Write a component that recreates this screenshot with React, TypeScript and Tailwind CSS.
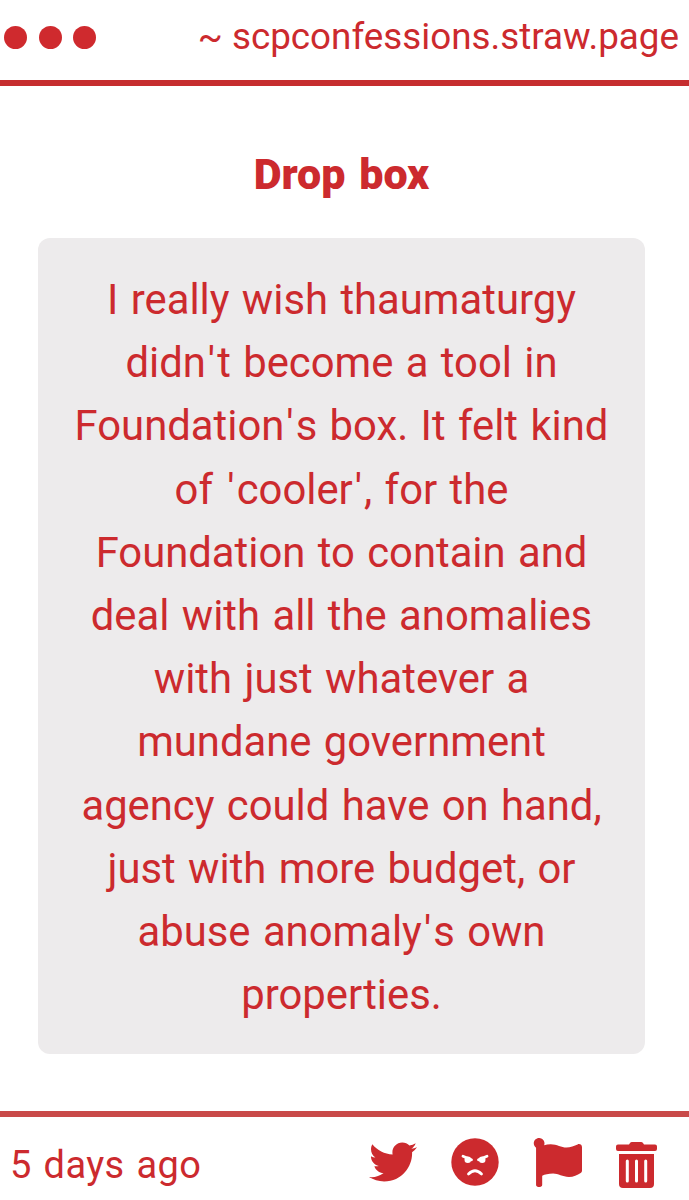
import { FaFlag, FaTwitter } from 'react-icons/fa'

const messageLines = [
  'I really wish thaumaturgy',
  'didn\'t become a tool in',
  'Foundation\'s box. It felt kind',
  'of \'cooler\', for the',
  'Foundation to contain and',
  'deal with all the anomalies',
  'with just whatever a',
  'mundane government',
  'agency could have on hand,',
  'just with more budget, or',
  'abuse anomaly\'s own',
  'properties.',
]

// The straight quote gets a little room on both sides
function MessageLine({ text }: { text: string }) {
  return (
    <p className="whitespace-nowrap">
      {text.split('\'').map((part, index) => (
        <span key={index}>
          {index > 0 && <span className="mx-[2px]">&#39;</span>}
          {part}
        </span>
      ))}
    </p>
  )
}

function AngryIcon() {
  return (
    <svg width="48" height="48" viewBox="0 0 48 48" fill="none" aria-hidden="true">
      <circle cx="24" cy="24" r="23.7" fill="currentColor" />
      <circle cx="16.800" cy="21.700" r="3.300" fill="white" />
      <circle cx="31.200" cy="21.700" r="3.300" fill="white" />
      <path d="m12 18.300 8.500 3.400M36 18.300l-8.500 3.400M17.500 36q6.500-6.500 13 0" stroke="white" strokeWidth="2.800" strokeLinecap="round" />
    </svg>
  )
}

function TrashIcon() {
  return (
    <svg width="41" height="46" viewBox="0 0 41 46" fill="currentColor" aria-hidden="true">
      <path d="M2 2.500h11l1-1.500q.6-1 2-1h9q1.400 0 2 1l1 1.500h11q2 0 2 2v2.500q0 2-2 2H2q-2 0-2-2V4.500q0-2 2-2Z" />
      <path
        fillRule="evenodd"
        d="M3 12h35v30q0 4-4 4H7q-4 0-4-4ZM9.800 19v20q0 1.500 1.500 1.500t1.500-1.500V19q0-1.500-1.500-1.500T9.800 19Zm9.200 0v20q0 1.500 1.500 1.500T22 39V19q0-1.500-1.500-1.500T19 19Zm9.200 0v20q0 1.500 1.500 1.500t1.500-1.500V19q0-1.500-1.500-1.500t-1.500 1.500Z"
      />
    </svg>
  )
}

export default function App() {
  return (
    <main className="flex h-[1200px] w-[689px] flex-col overflow-hidden bg-white font-['Roboto',sans-serif] text-[#cc2a2e]">
      <header className="flex h-[86px] shrink-0 items-start justify-between border-b-[6px] border-[#c62d2f] pl-1 pr-[10px]">
        <div className="flex gap-[11.5px] pt-[26px]">
          <span className="size-[23px] rounded-full bg-[#cf2a2e]" />
          <span className="size-[23px] rounded-full bg-[#cf2a2e]" />
          <span className="size-[23px] rounded-full bg-[#cf2a2e]" />
        </div>
        <p className="whitespace-nowrap pt-3 text-[36.8px] leading-[50px]">~ scpconfessions.straw.page</p>
      </header>

      <h1 className="mt-[61px] h-[91px] w-[683px] text-center text-[43px] font-black leading-[54px] [word-spacing:3px]">Drop box</h1>

      <section className="ml-[38px] h-[816px] w-[607px] shrink-0 rounded-[12px] bg-[#edebec] pt-[30px] text-center text-[41.8px] leading-[63.2px] [word-spacing:2px]">
        {messageLines.map((line) => (
          <MessageLine key={line} text={line} />
        ))}
      </section>

      <footer className="mt-[57px] flex h-[89px] shrink-0 items-start justify-between border-t-[6px] border-[#c94a49] pl-[10px] pr-8">
        <time className="pt-5 text-[38px] leading-[57px] tracking-[0.4px] [word-spacing:2px]">5 days ago</time>
        <div className="flex items-start gap-[34px] pt-[21px]">
          <FaTwitter size={48} />
          <AngryIcon />
          <FaFlag size={49} />
          <span className="pt-1">
            <TrashIcon />
          </span>
        </div>
      </footer>
    </main>
  )
}
